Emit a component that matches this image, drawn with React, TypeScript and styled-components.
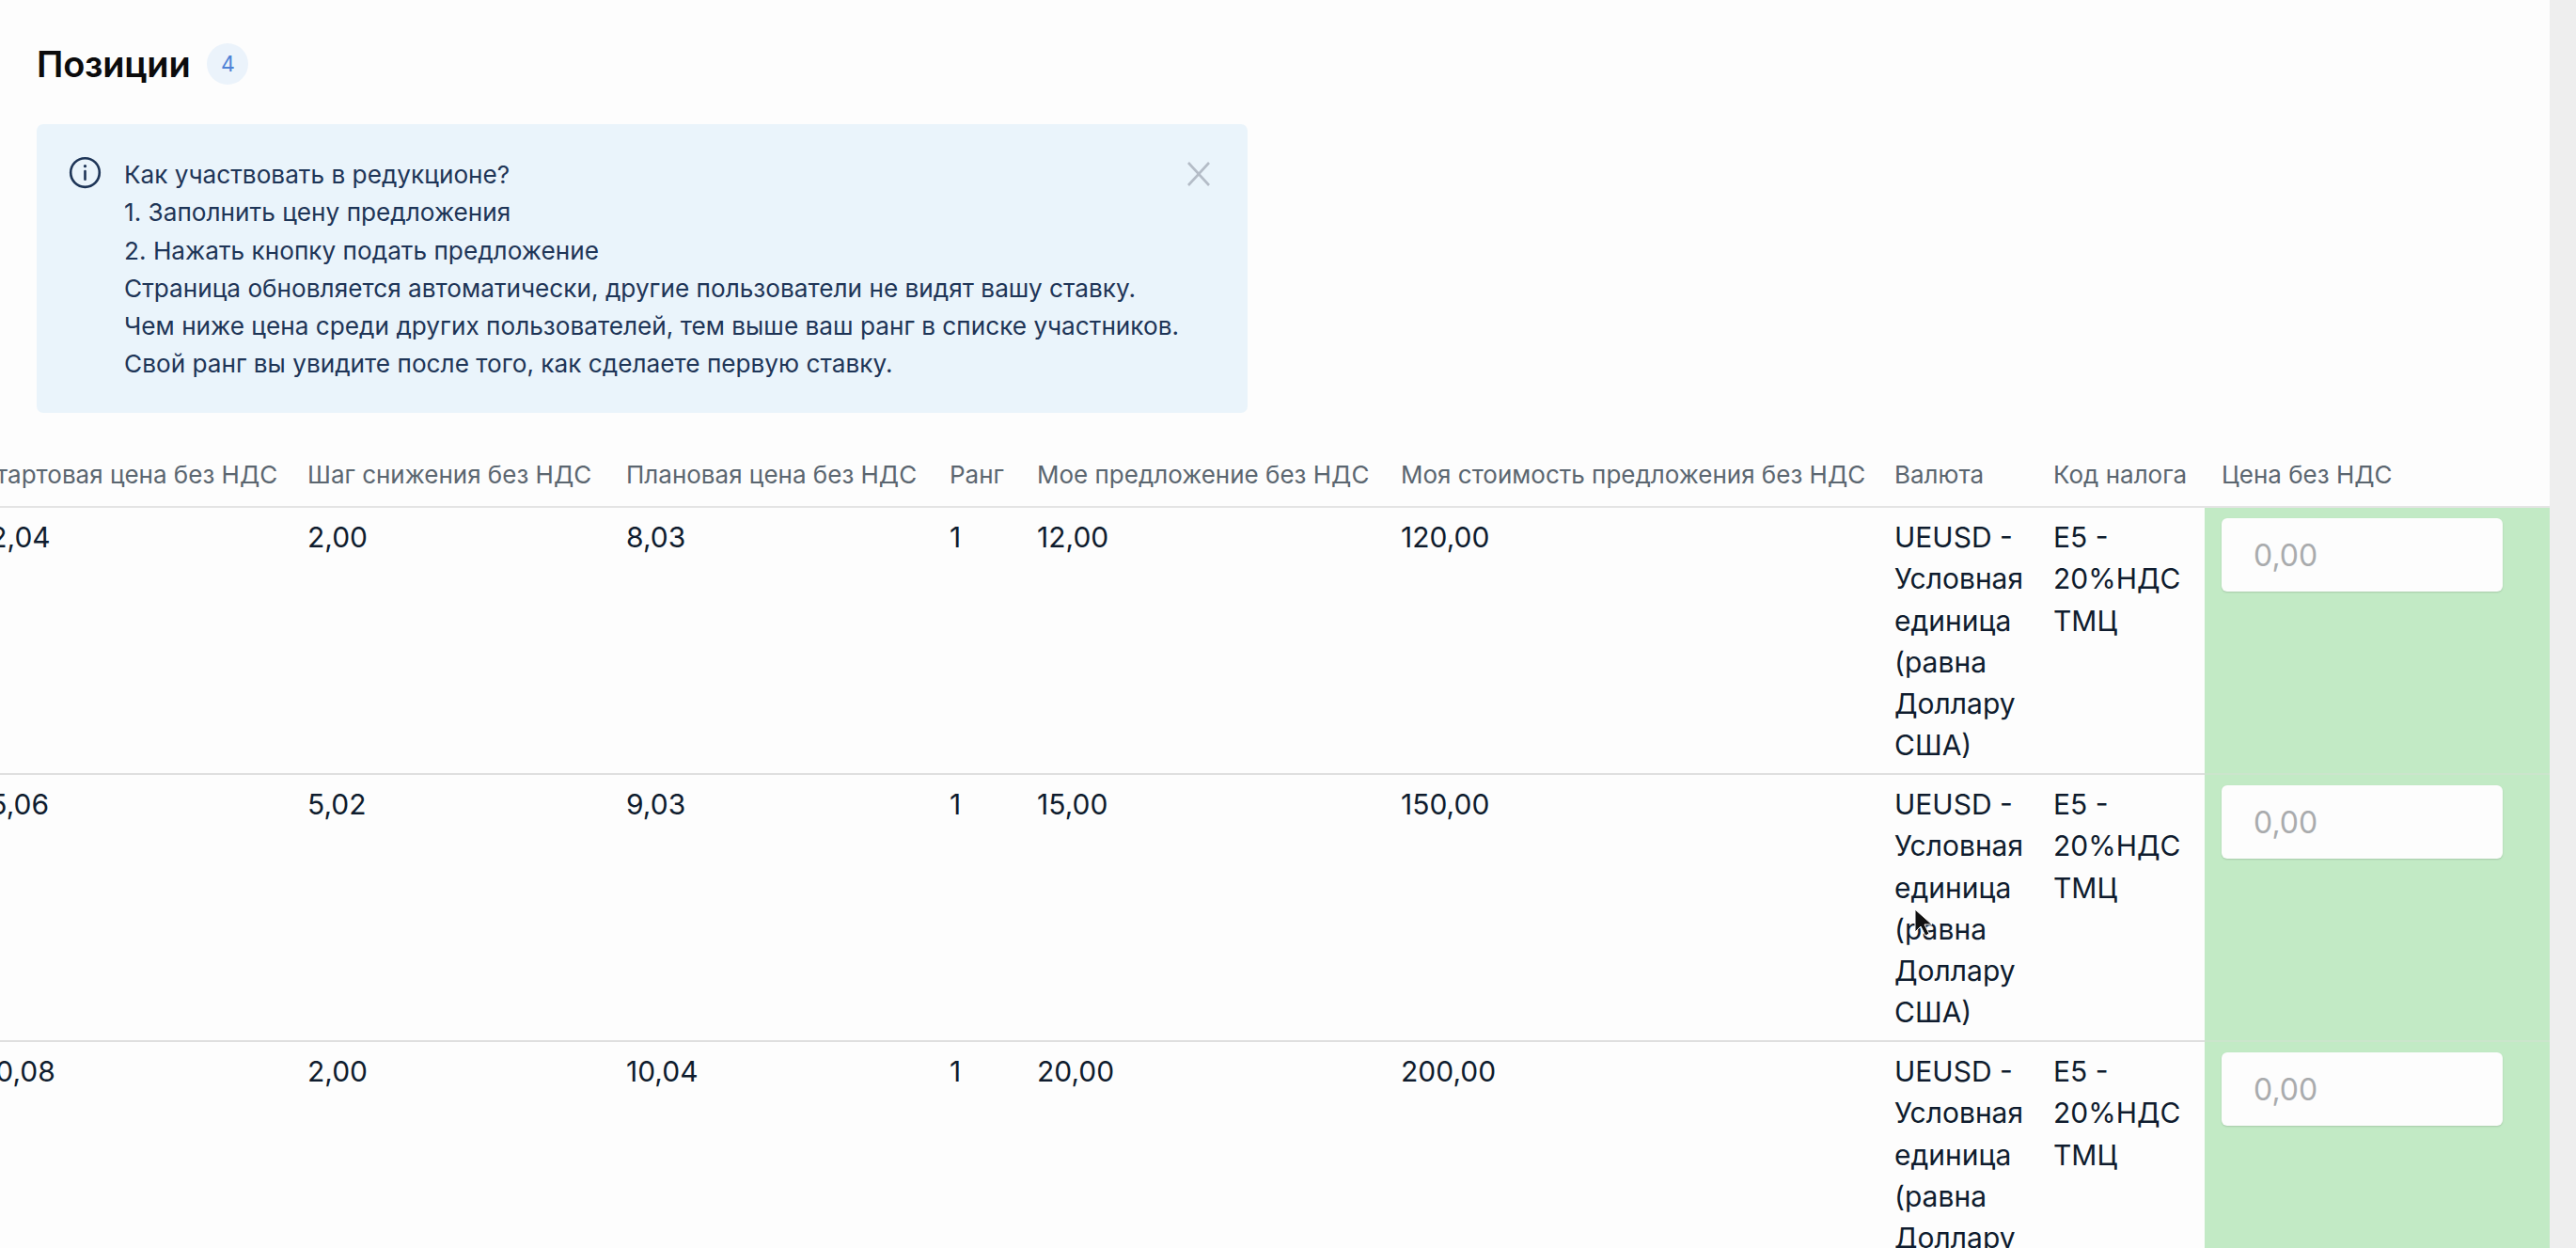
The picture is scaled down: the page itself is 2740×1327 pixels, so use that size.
import React from "react";
import styled, { createGlobalStyle } from "styled-components";

const Global = createGlobalStyle`
  html, body { margin: 0; padding: 0; height: 100%; overflow: hidden; background: #fdfdfd; }
  body { font-family: Inter, "Noto Sans", sans-serif; }
  * { box-sizing: border-box; }
`;

const Page = styled.div`
  position: relative;
  height: 1327px;
  width: 2740px;
  overflow: hidden;
  display: flex;
`;
const Main = styled.main`
  width: 2712px;
  flex: none;
  padding-top: 46px;
`;
const Gutter = styled.div`
  flex: 1;
  background: #eeeeee;
`;
const Heading = styled.div`
  display: flex;
  align-items: center;
  gap: 18px;
  padding-left: 39px;
  height: 44px;
`;
const Title = styled.h2`
  margin: 0;
  font-size: 38px;
  font-weight: 600;
  color: #0b0b0c;
  letter-spacing: -0.2px;
`;
const Count = styled.span`
  width: 44px;
  height: 44px;
  border-radius: 50%;
  background: #ebf3fb;
  color: #4f82d6;
  font-size: 23px;
  display: flex;
  align-items: center;
  justify-content: center;
`;
const Alert = styled.section`
  margin: 42px 0 0 39px;
  width: 1288px;
  height: 307px;
  background: #eaf4fb;
  border-radius: 7px;
  padding: 34px 36px 0 34px;
  display: flex;
  align-items: flex-start;
`;
const InfoIcon = styled.svg`
  width: 35px;
  height: 35px;
  flex: none;
  margin-right: 24px;
  color: #1e3557;
`;
const AlertText = styled.div`
  flex: 1;
  font-size: 26.2px;
  line-height: 40.3px;
  color: #1e3557;
`;
const CloseIcon = styled.svg`
  width: 32px;
  height: 32px;
  flex: none;
  color: #b4bcc7;
  margin-top: 3px;
`;
const Table = styled.div`
  margin-top: 43px;
  overflow: hidden;
`;
const columns = "350px 339px 344px 93px 387px 525px 169px 161px 367px";
const Row = styled.div`
  display: grid;
  grid-template-columns: ${columns};
  margin-left: -23px;
  width: 2735px;
`;
const Head = styled(Row)`
  height: 58px;
  border-bottom: 2px solid #e4e4e4;
  font-size: 26px;
  color: #5b6670;
`;
const HeadCell = styled.span<{ $inset?: boolean }>`
  padding: 7px 0 0 ${(p) => (p.$inset ? "18px" : "0")};
  white-space: nowrap;
`;
const BodyRow = styled(Row)`
  height: 284px;
  border-bottom: 2px solid #dfdfdf;
`;
const Cell = styled.div`
  font-size: 30px;
  line-height: 44.3px;
  color: #0f1c2e;
  padding: 9px 12px 0 0;
`;
const PriceCell = styled.div`
  background: #c2eac5;
  border-bottom: 2px solid #cbe5cc;
  margin-bottom: -2px;
  padding: 11px 0 0 18px;
`;
const PriceInput = styled.input`
  display: block;
  width: 299px;
  height: 78px;
  border: 0;
  border-radius: 6px;
  background: #fdfdfd;
  box-shadow: 0 1px 2px rgba(0, 0, 0, 0.14);
  padding: 0 0 0 34px;
  font: 400 32px Inter, sans-serif;
  outline: none;
  &::placeholder { color: #a9abad; opacity: 1; }
`;
const Cursor = styled.svg`
  position: absolute;
  left: 2036px;
  top: 966px;
  width: 20px;
  height: 30px;
`;

const rows = [
  ["12,04", "2,00", "8,03", "1", "12,00", "120,00"],
  ["15,06", "5,02", "9,03", "1", "15,00", "150,00"],
  ["20,08", "2,00", "10,04", "1", "20,00", "200,00"],
];
const heads = [
  "Стартовая цена без НДС",
  "Шаг снижения без НДС",
  "Плановая цена без НДС",
  "Ранг",
  "Мое предложение без НДС",
  "Моя стоимость предложения без НДС",
  "Валюта",
  "Код налога",
];

export default function App() {
  return (
    <Page>
      <Global />
      <Main>
        <Heading>
          <Title>Позиции</Title>
          <Count>4</Count>
        </Heading>
        <Alert>
          <InfoIcon viewBox="0 0 24 24" fill="none" stroke="currentColor" strokeWidth="1.8" strokeLinecap="round">
            <circle cx="12" cy="12" r="10.5" />
            <path d="M12 11v6" />
            <path d="M12 7.2v.1" strokeWidth="2.2" />
          </InfoIcon>
          <AlertText>
            <div>Как участвовать в редукционе?</div>
            <div>1. Заполнить цену предложения</div>
            <div>2. Нажать кнопку подать предложение</div>
            <div>Страница обновляется автоматически, другие пользователи не видят вашу ставку.</div>
            <div>Чем ниже цена среди других пользователей, тем выше ваш ранг в списке участников.</div>
            <div>Свой ранг вы увидите после того, как сделаете первую ставку.</div>
          </AlertText>
          <CloseIcon viewBox="0 0 32 32" fill="none" stroke="currentColor" strokeWidth="2.6">
            <path d="M5 4l22 24M27 4L5 28" />
          </CloseIcon>
        </Alert>
        <Table>
          <Head>
            {heads.map((h) => (
              <HeadCell key={h}>{h}</HeadCell>
            ))}
            <HeadCell $inset>Цена без НДС</HeadCell>
          </Head>
          {rows.map((r) => (
            <BodyRow key={r[0]}>
              {r.map((c, i) => (
                <Cell key={i}>{c}</Cell>
              ))}
              <Cell>UEUSD - Условная единица (равна Доллару США)</Cell>
              <Cell>E5 - 20%НДС ТМЦ</Cell>
              <PriceCell>
                <PriceInput placeholder="0,00" />
              </PriceCell>
            </BodyRow>
          ))}
        </Table>
      </Main>
      <Gutter />
      <Cursor viewBox="0 0 20 30">
        <path d="M1 1v24l6-6 5 10 4-2-5-10h8z" fill="#111" stroke="#fff" strokeWidth="1" />
      </Cursor>
    </Page>
  );
}
